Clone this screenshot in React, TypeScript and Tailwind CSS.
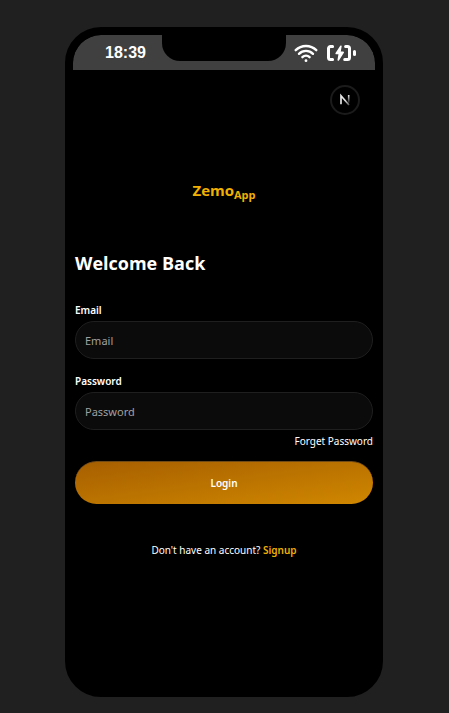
import React from "react";

function WifiIcon() {
  return (
    <svg width="24" height="20" viewBox="0 0 24 20" fill="none" stroke="white" strokeWidth="2.4" strokeLinecap="round" aria-hidden="true">
      <path d="M1.7 7.2a14.6 14.6 0 0 1 20.6 0" />
      <path d="M5 10.8a9.9 9.9 0 0 1 14 0" />
      <path d="M8.4 14.2a5.1 5.1 0 0 1 7.2 0" />
      <circle cx="12" cy="17.7" r="1.4" fill="white" stroke="none" />
    </svg>
  );
}

function BatteryIcon() {
  return (
    <svg width="30" height="20" viewBox="0 0 30 20" fill="none" stroke="white" strokeWidth="3" strokeLinecap="round" strokeLinejoin="round" aria-hidden="true">
      <path d="M6.6 3.5H4.5a2 2 0 0 0-2 2v9a2 2 0 0 0 2 2h2.1" />
      <path d="M19.6 3.5h1.9a2 2 0 0 1 2 2v9a2 2 0 0 1-2 2h-2.8" />
      <path d="M28.5 8.6v2.8" />
      <path d="M14.9 3.2 10.2 10.5h3.2L12.3 17l4.9-7.6h-3.4z" fill="white" strokeWidth="1.6" />
    </svg>
  );
}

function FrameworkBadge() {
  return (
    <button type="button" aria-label="Open developer tools" className="flex size-[30px] items-center justify-center rounded-full border-2 border-[#1b1b1b] bg-black">
      <svg width="14" height="14" viewBox="0 0 14 14" fill="none" aria-hidden="true">
        <defs>
          <linearGradient id="diagonal" x1="3" y1="2" x2="11" y2="12" gradientUnits="userSpaceOnUse">
            <stop offset="0.5" stopColor="#e5e5e5" />
            <stop offset="1" stopColor="#e5e5e5" stopOpacity="0.4" />
          </linearGradient>
          <linearGradient id="stem" x1="10" y1="2" x2="10" y2="11" gradientUnits="userSpaceOnUse">
            <stop stopColor="#e5e5e5" />
            <stop offset="1" stopColor="#e5e5e5" stopOpacity="0" />
          </linearGradient>
        </defs>
        <path d="M3 11.2V2.8l8 9.2" stroke="url(#diagonal)" strokeWidth="1.7" />
        <path d="M10.7 2v8.4" stroke="url(#stem)" strokeWidth="1.6" />
      </svg>
    </button>
  );
}

function Field({ id, label, type }: { id: string; label: string; type: string }) {
  return (
    <div className="flex flex-col gap-1">
      <label htmlFor={id} className="text-[10px] leading-[14px] font-semibold">{label}</label>
      <input
        id={id}
        type={type}
        placeholder={label}
        className="h-[38px] w-full rounded-full border border-[#1f1f1f] bg-[#0b0b0b] px-[9px] text-[11px] text-white outline-none placeholder:text-[#a0a0a0]"
      />
    </div>
  );
}

export default function App() {
  return (
    <div className="flex min-h-screen justify-center bg-[#202020] pt-[27px] pr-[66px] pb-4 pl-[65px] font-['Noto_Sans','Open_Sans',sans-serif] text-white">
      <div className="flex w-full max-w-[318px] flex-col overflow-hidden rounded-[36px] border-8 border-black bg-black">
        <header className="grid h-[35px] grid-cols-[1fr_124px_1fr] rounded-t-[28px] bg-[#404040]">
          <time className="self-center pl-4 text-center font-['Liberation_Sans',Arial,sans-serif] text-base leading-5 font-bold">18:39</time>
          <div className="h-[26px] rounded-b-[18px] bg-black" />
          <div className="flex items-center gap-2 pl-2">
            <WifiIcon />
            <BatteryIcon />
          </div>
        </header>
        <div className="flex justify-end px-[15px] pt-[15px]">
          <FrameworkBadge />
        </div>
        <main className="flex flex-col px-[2px] pt-[63px]">
          <p className="text-center font-['Open_Sans','Noto_Sans',sans-serif] text-[15px] leading-6 font-bold text-[#f0b100]">Zemo<sub className="text-[11px]">App</sub></p>
          <h1 className="mt-[47px] font-['Open_Sans','Noto_Sans',sans-serif] text-lg leading-7 font-bold">Welcome Back</h1>
          <form className="mt-[26px] flex flex-col" onSubmit={(e) => e.preventDefault()}>
            <div className="flex flex-col gap-[15px]">
              <Field id="email" label="Email" type="email" />
              <Field id="password" label="Password" type="password" />
            </div>
            <a href="#forgot" className="mt-1 self-end text-[10px] leading-[14px]">Forget Password</a>
            <button type="submit" className="mt-[13px] h-[43px] w-full rounded-full border-t border-[#704a16] bg-linear-[to_bottom_right,#a65f00,#d08700] text-[10px] font-semibold">Login</button>
          </form>
          <p className="mt-[39px] text-center text-[10px] leading-[14px]">
            Don't have an account? <a href="#signup" className="font-semibold text-[#f0b100]">Signup</a>
          </p>
        </main>
      </div>
    </div>
  );
}
